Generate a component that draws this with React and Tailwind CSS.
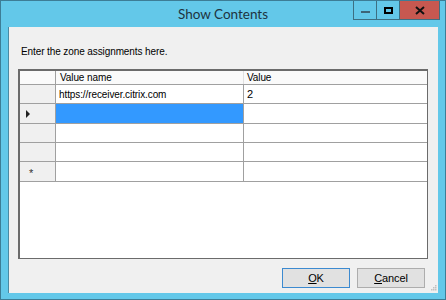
import React from "react";

const rows = [
  { name: "https://receiver.citrix.com", value: "2", h: "h-[19px]" },
  { name: "", value: "", h: "h-[20px]", selected: true, marker: "arrow" },
  { name: "", value: "", h: "h-[19px]" },
  { name: "", value: "", h: "h-[19px]" },
  { name: "", value: "", h: "h-[20px]", marker: "star" },
];

function RowHeader({ marker }) {
  return (
    <div className="w-[36px] shrink-0 bg-[#f0f0f0] border-r border-[#a0a0a0] flex items-center pl-[6px]">
      {marker === "arrow" && (
        <svg width="5" height="8" viewBox="0 0 5 8">
          <path d="M0 0 L4 4 L0 8 Z" fill="#222" />
        </svg>
      )}
      {marker === "star" && <span className="text-[11px] leading-none text-[#333] pl-[3px] pt-[3px]">*</span>}
    </div>
  );
}

export default function App() {
  return (
    <div
      className="w-[446px] h-[300px] bg-[#63c8e9] border border-[#3d7d96] flex flex-col overflow-hidden"
      style={{ fontFamily: "'Liberation Sans', Arial, sans-serif" }}
    >
      {/* title bar */}
      <div className="h-[26px] grid grid-cols-[1fr_auto_1fr] items-start">
        <div />
        <div className="pt-[4px] text-[13.5px] leading-[19px] text-[#1e3440]" style={{ fontFamily: "Lato, 'Noto Sans', sans-serif" }}>
          Show Contents
        </div>
        <div className="flex justify-end pr-[5px]">
          <div className="flex h-[19px] border border-t-0 border-[#3d6f82]">
            <div className="w-[23px] flex items-center justify-center border-r border-[#3d6f82]">
              <div className="w-[9px] h-[2px] bg-[#3d6577] mt-[3px]" />
            </div>
            <div className="w-[23px] flex items-center justify-center border-r border-[#3d6f82]">
              <div className="w-[9px] h-[7px] border-2 border-black" />
            </div>
            <div className="w-[39px] bg-[#c75850] flex items-center justify-center">
              <svg width="10" height="9" viewBox="0 0 10 9">
                <path d="M1 1 L9 8 M9 1 L1 8" stroke="#111" strokeWidth="2" />
              </svg>
            </div>
          </div>
        </div>
      </div>

      {/* client area */}
      <div className="flex-1 mx-[7px] mb-[6px] bg-[#f0f0f0] border-l border-[#4a8aa3] flex flex-col text-[10px] tracking-[-0.1px] text-black">
        <div className="pl-[12px] pt-[19px] h-[42px] leading-[12px]">Enter the zone assignments here.</div>

        <div className="ml-[9px] mr-[10px] h-[190px] border border-[#6b6b6b] border-l-2 border-t-2 bg-white flex flex-col">
          {/* header */}
          <div className="flex h-[14px] bg-[#fafafa] border-b border-[#a0a0a0] leading-[13px]">
            <div className="w-[36px] shrink-0 border-r border-[#a0a0a0]" />
            <div className="w-[188px] shrink-0 border-r border-[#e0e0e0] pl-[4px]">Value name</div>
            <div className="flex-1 pl-[3px]">Value</div>
          </div>
          {rows.map((r, i) => (
            <div key={i} className={`flex ${r.h} border-b border-[#a0a0a0]`}>
              <RowHeader marker={r.marker} />
              <div
                className={`w-[188px] shrink-0 border-r border-[#a0a0a0] pl-[3px] flex items-center ${
                  r.selected ? "bg-[#3399ff]" : ""
                }`}
              >
                {r.name}
              </div>
              <div className="flex-1 pl-[3px] flex items-center text-[11px]">{r.value}</div>
            </div>
          ))}
        </div>

        <div className="flex justify-end gap-[7px] pr-[13px] pt-[9px]">
          <button className="w-[68px] h-[20px] bg-[#e1e1e1] border border-[#3c8ad0] text-[11px] leading-none">
            <span className="underline">O</span>K
          </button>
          <button className="w-[68px] h-[20px] bg-[#e1e1e1] border border-[#adadad] text-[11px] leading-none">
            <span className="underline">C</span>ancel
          </button>
        </div>
        <div className="flex justify-end pr-[1px] -mt-[3px]">
          <svg width="6" height="6" viewBox="0 0 6 6">
            <rect x="4" y="0" width="1.5" height="1.5" fill="#c0c0c0" />
            <rect x="2" y="2" width="1.5" height="1.5" fill="#c0c0c0" />
            <rect x="4" y="2" width="1.5" height="1.5" fill="#c0c0c0" />
            <rect x="0" y="4" width="1.5" height="1.5" fill="#c0c0c0" />
            <rect x="2" y="4" width="1.5" height="1.5" fill="#c0c0c0" />
            <rect x="4" y="4" width="1.5" height="1.5" fill="#c0c0c0" />
          </svg>
        </div>
      </div>
    </div>
  );
}
